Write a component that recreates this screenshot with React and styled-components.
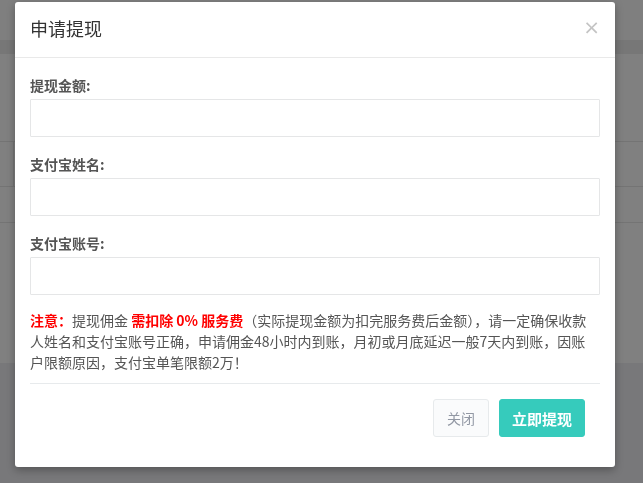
import React from "react";
import styled, { createGlobalStyle } from "styled-components";

const Global = createGlobalStyle`
  html, body { margin: 0; padding: 0; }
  body {
    width: 643px;
    height: 483px;
    overflow: hidden;
    background: #808080;
    font-family: "Noto Sans CJK SC", "Noto Sans", sans-serif;
  }
`;

const Page = styled.div`
  width: 643px;
  height: 483px;
  display: flex;
  flex-direction: column;
  background: #808080;
`;

const Band = styled.div`
  height: ${(p) => p.$h}px;
  background: ${(p) => p.$bg || "#808080"};
  border-top: ${(p) => (p.$line ? "1px solid #747474" : "none")};
  flex: ${(p) => (p.$grow ? 1 : "none")};
`;

const BoxBand = styled.div`
  height: 44px;
  border-top: 1px solid #747474;
  display: flex;
`;

const BoxEdge = styled.div`
  width: 13px;
  border-right: 1px solid #747474;
`;

const Overlay = styled.div`
  position: fixed;
  inset: 0;
  padding: 2px 0 0 15px;
`;

const Modal = styled.div`
  width: 600px;
  background: #fff;
  border-radius: 3px;
  box-shadow: 0 3px 9px rgba(0, 0, 0, 0.3);
`;

const Header = styled.div`
  box-sizing: border-box;
  height: 56px;
  padding: 0 15px;
  border-bottom: 1px solid #e9e9e9;
  display: flex;
  align-items: center;
  justify-content: space-between;
`;

const Title = styled.h4`
  margin: -3px 0 0;
  font-size: 18px;
  font-weight: normal;
  color: #333;
  line-height: 26px;
`;

const Close = styled.button`
  border: 0;
  background: transparent;
  padding: 0;
  margin: -5px 0 0 0;
  font-family: "DejaVu Sans", sans-serif;
  font-size: 20px;
  font-weight: normal;
  color: #c4c4c4;
  line-height: 1;
  cursor: pointer;
`;

const Body = styled.div`
  padding: 17px 15px 0;
`;

const Group = styled.div`
  margin-bottom: ${(p) => (p.$last ? 15 : 17)}px;
`;

const Label = styled.label`
  display: block;
  font-size: 14px;
  font-weight: bold;
  color: #555;
  line-height: 20px;
  margin-bottom: 4px;
`;

const Input = styled.input`
  display: block;
  width: 100%;
  height: 38px;
  box-sizing: border-box;
  border: 1px solid #e5e6e7;
  border-radius: 1px;
  padding: 6px 12px;
  font-size: 14px;
  outline: none;
  background: #fff;
`;

const Notice = styled.p`
  margin: 0 0 10px;
  padding-right: 9px;
  font-size: 14px;
  line-height: 21px;
  color: #555;
`;

const Red = styled.span`
  color: #ff0000;
  font-weight: bold;
`;

const Divider = styled.div`
  border-top: 1px solid #e7eaec;
`;

const Footer = styled.div`
  display: flex;
  justify-content: flex-end;
  gap: 10px;
  padding: 15px 30px 30px 15px;
`;

const Button = styled.button`
  height: 38px;
  box-sizing: border-box;
  padding: 0 ${(p) => (p.$primary ? 12 : 13)}px;
  border-radius: 3px;
  font-family: "Noto Sans CJK SC", sans-serif;
  font-size: ${(p) => (p.$primary ? 15 : 14)}px;
  font-weight: ${(p) => (p.$primary ? "bold" : "normal")};
  color: ${(p) => (p.$primary ? "#fff" : "#9298a4")};
  background: ${(p) => (p.$primary ? "#36cbbc" : "#fafbfc")};
  border: 1px solid ${(p) => (p.$primary ? "#36cbbc" : "#e7eaec")};
  cursor: pointer;
`;

export default function App() {
  return (
    <>
      <Global />
      <Page>
        <Band $h={40} $bg="#7f7f7f" />
        <Band $h={14} $bg="#777777" />
        <Band $h={87} />
        <BoxBand>
          <BoxEdge />
        </BoxBand>
        <Band $h={35} $line />
        <Band $h={140} $line />
        <Band $grow $bg="#78787a" />
      </Page>
      <Overlay>
        <Modal>
          <Header>
            <Title>申请提现</Title>
            <Close aria-label="close">×</Close>
          </Header>
          <Body>
            <Group>
              <Label>提现金额:</Label>
              <Input />
            </Group>
            <Group>
              <Label>支付宝姓名:</Label>
              <Input />
            </Group>
            <Group $last>
              <Label>支付宝账号:</Label>
              <Input />
            </Group>
            <Notice>
              <Red>注意：</Red>提现佣金 <Red>需扣除 0% 服务费</Red>（实际提现金额为扣完服务费后金额），请一定确保收款人姓名和支付宝账号正确，申请佣金48小时内到账，月初或月底延迟一般7天内到账，因账户限额原因，支付宝单笔限额2万！
            </Notice>
            <Divider />
          </Body>
          <Footer>
            <Button>关闭</Button>
            <Button $primary>立即提现</Button>
          </Footer>
        </Modal>
      </Overlay>
    </>
  );
}
